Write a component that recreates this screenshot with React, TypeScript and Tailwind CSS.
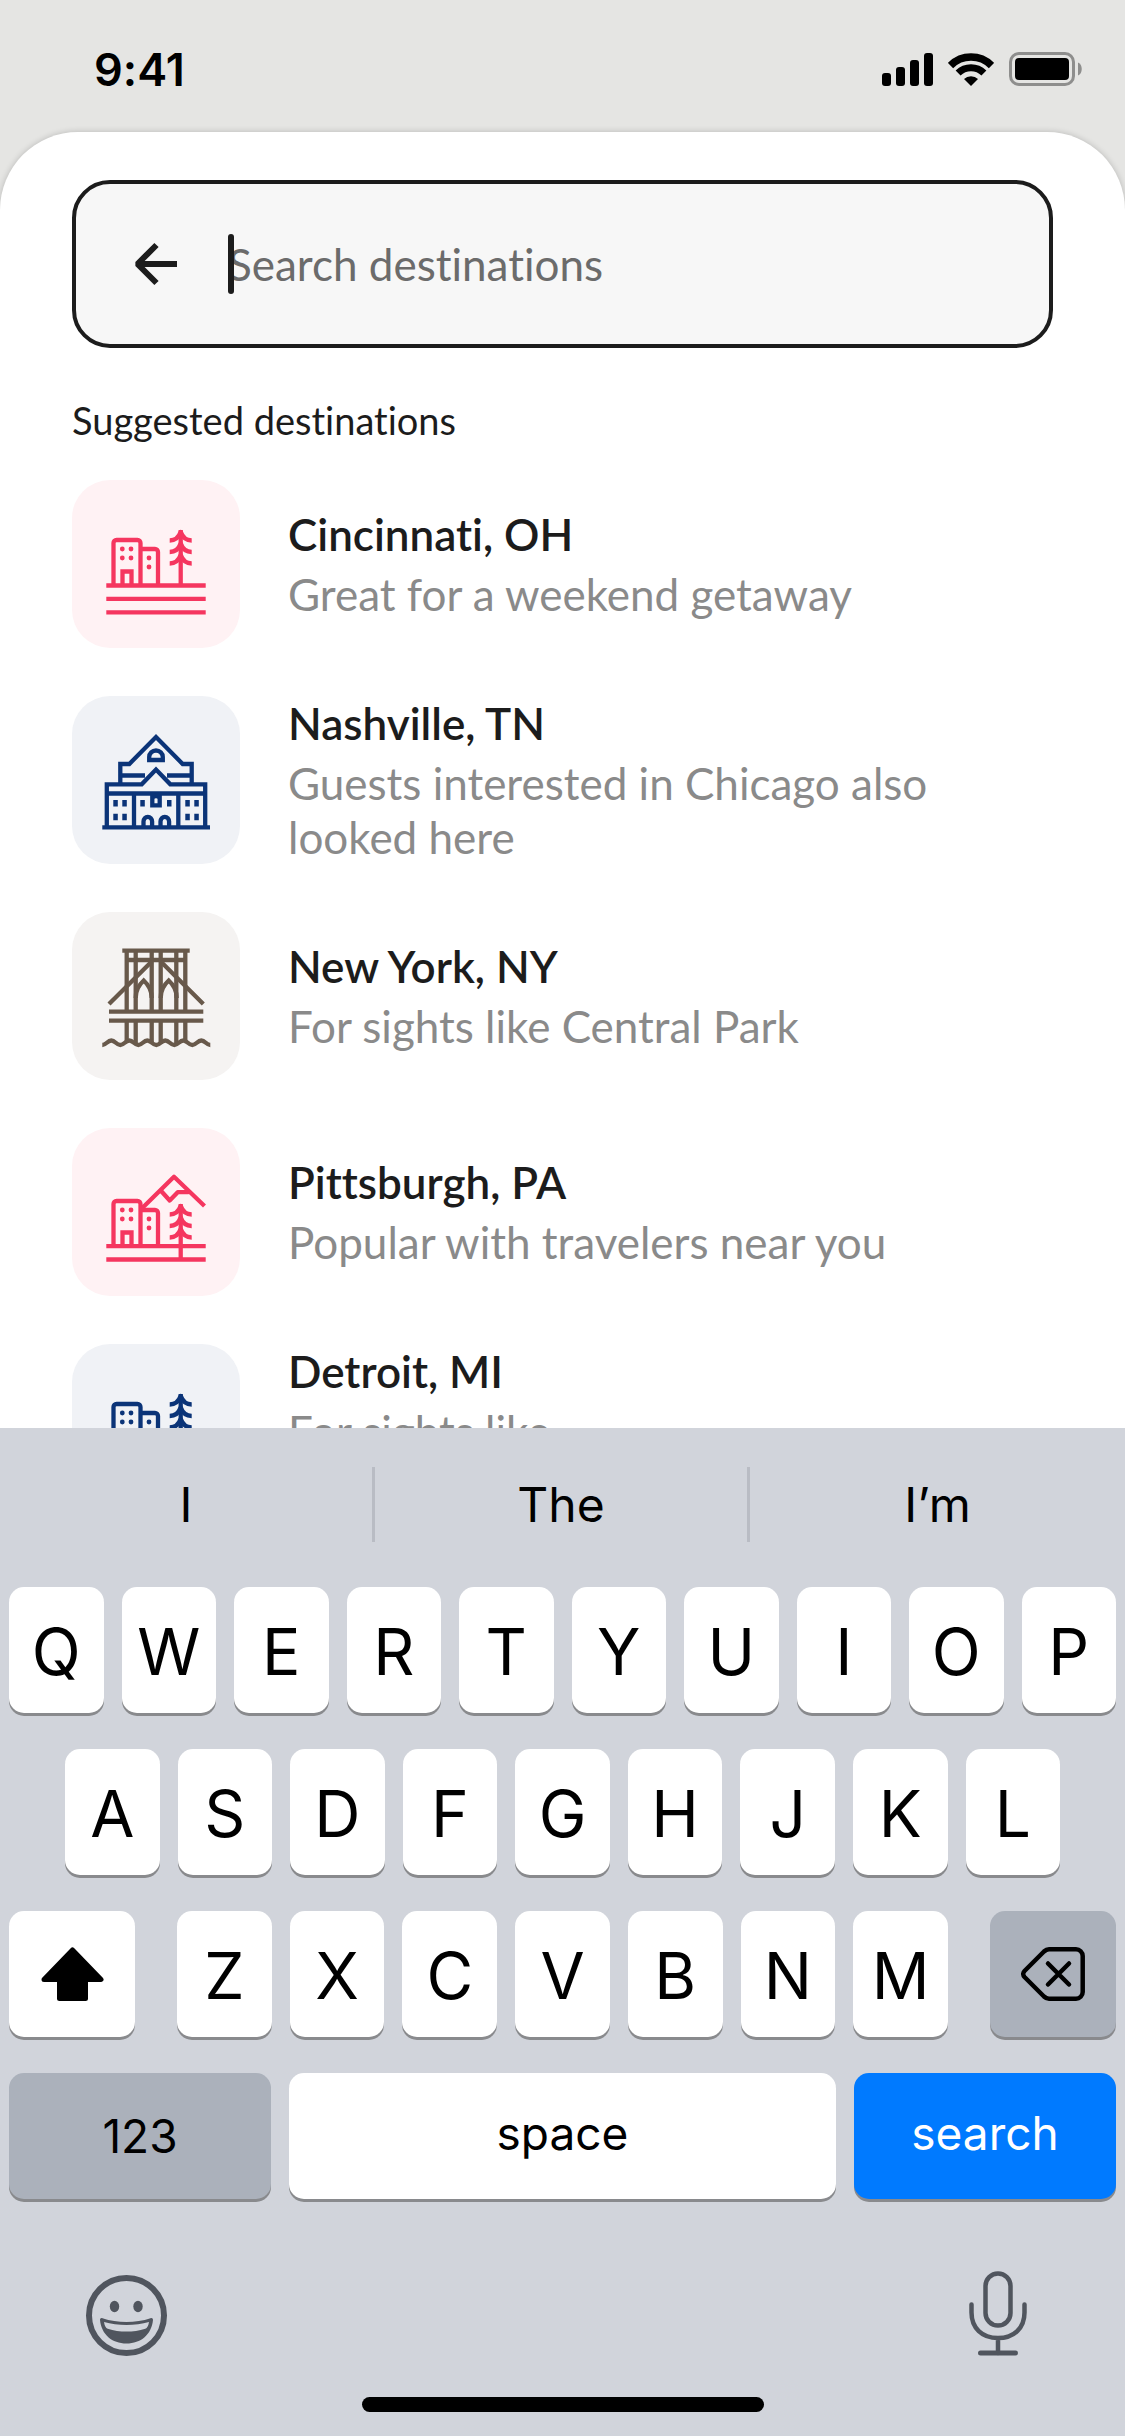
import { useState } from 'react';

type Destination = {
  id: string;
  title: string;
  description: string;
  tileClass: string;
  icon: React.ReactNode;
  alignTop?: boolean;
};

const Buildings: React.FC<{ top: number }> = ({ top }) => (
  <g transform={`translate(0 ${top})`}>
    <path d="M41.5 46V4a3 3 0 0 1 3-3h21a3 3 0 0 1 3 3v42M68.5 10H83a3 3 0 0 1 3 3v33M50.5 46V32.500h9V46" />
    <g fill="currentColor" stroke="none">
      <circle cx="50.300" cy="10" r="2.400" />
      <circle cx="59" cy="10" r="2.400" />
      <circle cx="50.300" cy="19" r="2.400" />
      <circle cx="59" cy="19" r="2.400" />
      <circle cx="77" cy="19" r="2.400" />
      <circle cx="77" cy="28" r="2.400" />
    </g>
  </g>
);

const Tree: React.FC<{ top: number; height: number }> = ({ top, height }) => (
  <g transform={`translate(0 ${top})`}>
    <path d={`M108.700 1V${height}`} />
    <path
      strokeWidth={4.5}
      strokeLinejoin="round"
      d="M97.700 11.500c5.500 0 9-3 11-8.500 2 5.500 5.500 8.500 11 8.500M97.700 23c5.500 0 9-3 11-8.500 2 5.500 5.500 8.500 11 8.500M97.700 34.500c5.500 0 9-3 11-8.500 2 5.500 5.500 8.500 11 8.500"
    />
  </g>
);

const CityIcon = () => (
  <svg className="size-full" viewBox="0 0 168 168" fill="none" stroke="currentColor" strokeWidth={4.3}>
    <Buildings top={59} />
    <Tree top={49} height={56} />
    <path d="M34.300 105.500h99.400M34.300 118.800h99.400M34.300 132.300h99.400" />
  </svg>
);

const HallIcon = () => (
  <svg className="size-full" viewBox="0 0 168 168" fill="none" stroke="currentColor" strokeWidth={4.3}>
    <path d="M30.300 131.300H138" />
    <path d="M34.800 131V88.300h34.900L84 73.500l14.300 14.800h34.900V131M35 97.500h98M62 97v34M106.300 97v34" />
    <path d="M48.300 88V68h9L84 41l26.700 27h9v20M48.300 79.500H73M95 79.500h24.700" />
    <path d="M77.200 64V61a6.800 6.500 0 0 1 13.600 0v3z" />
    <path d="M80.300 99v10.300h7.400V99M80.300 103a3.700 3 0 0 1 7.400 0" />
    <path d="M71.500 131v-5.500a4.300 4.700 0 0 1 8.600 0v5.500M88.500 131v-5.500a4.300 4.700 0 0 1 8.600 0v5.500" />
    <g fill="currentColor" stroke="none">
      <path d="M41.300 104h4.500v6.500h-4.500zM50.300 104h4.500v6.500h-4.500zM41.300 117.700h4.500v6.500h-4.500zM50.300 117.700h4.500v6.500h-4.500z" />
      <path d="M113.300 104h4.500v6.500h-4.500zM122.300 104h4.500v6.500h-4.500zM113.300 117.700h4.500v6.500h-4.500zM122.300 117.700h4.500v6.500h-4.500z" />
      <path d="M68.300 104h4.500v6.500h-4.500zM95 104h4.500v6.500H95z" />
    </g>
  </svg>
);

const BridgeIcon = () => (
  <svg className="size-full" viewBox="0 0 168 168" fill="none" stroke="currentColor" strokeWidth={4.3}>
    <path d="M50.300 38.700h67.400M54.700 48h58.600M37 99.700h94.300M37 108.700h94.300" />
    <path d="M54.700 39v60M63.700 39v60M79.700 39v60M88.700 39v60M104.300 39v60M113.300 39v60" />
    <path d="M54.700 109v21M63.700 109v23M79.700 109v21M88.700 109v21M104.300 109v23M113.300 109v21" />
    <path d="M37 92l42.700-42.500M131.300 92L88.700 49.500" />
    <path d="M63.700 86c0-7 3-13 8-17.500 5 4.500 8 10.500 8 17.500M88.700 86c0-7 3-13 8-17.500 5 4.500 8 10.500 8 17.500" />
    <path d="M30.300 133c4 0 5-4.500 9-4.500s5 4.500 9 4.500 5-4.500 9-4.500 5 4.500 9 4.500 5-4.500 9-4.500 5 4.500 9 4.500 5-4.500 9-4.500 5 4.500 9 4.500 5-4.500 9-4.500 5 4.500 9 4.500 5-4.500 9-4.500 5 4.500 9 4.500" />
  </svg>
);

const MountainIcon = () => (
  <svg className="size-full" viewBox="0 0 168 168" fill="none" stroke="currentColor" strokeWidth={4.3}>
    <Buildings top={72} />
    <Tree top={75} height={57} />
    <path strokeLinejoin="round" d="M70.300 80L102 48.700 132.500 78M88.700 62.500l9 10 8-8.300h11" />
    <path d="M34.300 118.200h99.400M34.300 131.500h99.400" />
  </svg>
);

const destinations: Destination[] = [
  {
    id: 'cincinnati',
    title: 'Cincinnati, OH',
    description: 'Great for a weekend getaway',
    tileClass: 'bg-[#fff2f4] text-[#f5365f]',
    icon: <CityIcon />,
  },
  {
    id: 'nashville',
    title: 'Nashville, TN',
    description: 'Guests interested in Chicago also looked here',
    tileClass: 'bg-[#f0f2f6] text-[#0b3478]',
    icon: <HallIcon />,
  },
  {
    id: 'new-york',
    title: 'New York, NY',
    description: 'For sights like Central Park',
    tileClass: 'bg-[#f5f3f2] text-[#68594b]',
    icon: <BridgeIcon />,
  },
  {
    id: 'pittsburgh',
    title: 'Pittsburgh, PA',
    description: 'Popular with travelers near you',
    tileClass: 'bg-[#fff2f4] text-[#f5365f]',
    icon: <MountainIcon />,
  },
  {
    id: 'detroit',
    title: 'Detroit, MI',
    description: 'For sights like',
    tileClass: 'bg-[#f0f2f6] text-[#0b3478]',
    icon: <CityIcon />,
    alignTop: true,
  },
];

const suggestions = ['I', 'The', 'I’m'];

const StatusBar = () => (
  <header className="flex h-[132px] shrink-0 items-center justify-between pt-1.5 pr-[43px] pl-[94px] text-black">
    <span className="font-['Inter'] text-[45px] leading-none font-semibold">9:41</span>
    <div className="flex items-center gap-[15px]">
      <svg className="h-[33px] w-[51px]" viewBox="0 0 51 33" fill="currentColor">
        <rect x="0" y="20" width="9" height="13" rx="3" />
        <rect x="14" y="14" width="9" height="19" rx="3" />
        <rect x="28" y="7" width="9" height="26" rx="3" />
        <rect x="42" y="0" width="9" height="33" rx="3" />
      </svg>
      <svg className="h-[33px] w-[46px]" viewBox="0 0 46 33" fill="none" stroke="currentColor">
        <path strokeWidth="7.500" d="M2.500 12.500a29 29 0 0 1 41 0" />
        <path strokeWidth="7" d="M10.100 20.100a18.300 18.300 0 0 1 25.800 0" />
        <path fill="currentColor" stroke="none" d="M23 33l-7-7a10 10 0 0 1 14 0z" />
      </svg>
      <svg className="h-[34px] w-[73px]" viewBox="0 0 73 34">
        <rect x="1.500" y="1.500" width="63" height="31" rx="8.500" fill="none" stroke="#8e8e8d" strokeWidth="3" />
        <rect x="6" y="6" width="54" height="22" rx="4" fill="currentColor" />
        <path d="M69 10.500c5 1.500 5 11.500 0 13z" fill="#8e8e8d" />
      </svg>
    </div>
  </header>
);

const keyBase = 'flex h-[126px] items-center justify-center rounded-[15px] shadow-[0_3px_0_#898a8d]';

const LetterKeys: React.FC<{ letters: string; onPress: (letter: string) => void }> = ({ letters, onPress }) => (
  <>
    {letters.split('').map((letter) => (
      <button
        key={letter}
        type="button"
        onClick={() => onPress(letter)}
        className={`${keyBase} min-w-0 flex-1 bg-white pt-1 text-[64px] leading-none`}
      >
        {letter}
      </button>
    ))}
  </>
);

const Keyboard: React.FC<{ onType: (text: string) => void; onDelete: () => void }> = ({ onType, onDelete }) => (
  <section className="shrink-0 bg-[#d1d4db] pt-[39px] pb-6 font-['Inter'] text-black">
    {/* Predictive bar */}
    <div className="grid h-[75px] grid-cols-3 divide-x-3 divide-[#b9bcc4]">
      {suggestions.map((word) => (
        <button key={word} type="button" onClick={() => onType(word)} className="text-[48px] leading-none">
          {word}
        </button>
      ))}
    </div>

    {/* Keys */}
    <div className="mt-[45px] flex flex-col gap-9 px-[9px]">
      <div className="flex gap-[18px]">
        <LetterKeys letters="QWERTYUIOP" onPress={onType} />
      </div>
      <div className="flex gap-[18px] px-14">
        <LetterKeys letters="ASDFGHJKL" onPress={onType} />
      </div>
      <div className="flex gap-[42px]">
        <button type="button" aria-label="Shift" className={`${keyBase} w-[126px] bg-white`}>
          <svg className="h-[54px] w-[63px]" viewBox="0 0 63 54" fill="currentColor" stroke="currentColor" strokeWidth="5" strokeLinejoin="round">
            <path d="M31.500 3L60 32.500H44.500v19h-26v-19H3z" />
          </svg>
        </button>
        <div className="flex flex-1 gap-[18px]">
          <LetterKeys letters="ZXCVBNM" onPress={onType} />
        </div>
        <button type="button" aria-label="Delete" onClick={onDelete} className={`${keyBase} w-[126px] bg-[#abb1bb]`}>
          <svg className="h-[54px] w-[64px]" viewBox="0 0 64 54" fill="none" stroke="currentColor" strokeWidth="4.500" strokeLinecap="round" strokeLinejoin="round">
            <path d="M28 2.300h27a6.700 6.700 0 0 1 6.700 6.700v36a6.700 6.700 0 0 1-6.700 6.700H28c-2 0-3.500-.8-5-2.200L3.500 30c-1.700-1.800-1.700-4.200 0-6L23 4.500c1.500-1.400 3-2.200 5-2.200z" />
            <path d="M27 16.500l21 21M48 16.500l-21 21" />
          </svg>
        </button>
      </div>
      <div className="flex gap-[18px] text-[46px] leading-none">
        <button type="button" className={`${keyBase} w-[262px] bg-[#abb1bb]`}>123</button>
        <button type="button" onClick={() => onType(' ')} className={`${keyBase} flex-1 bg-white pb-1.5`}>space</button>
        <button type="submit" className={`${keyBase} w-[262px] bg-[#007aff] pb-1.5 text-white`}>search</button>
      </div>
    </div>

    <div className="mt-[72px] flex items-end justify-between pr-[98px] pl-[86px] text-[#50555e]">
      <button type="button" aria-label="Emoji">
        <svg className="size-[81px]" viewBox="0 0 81 81" fill="none" stroke="currentColor" strokeWidth="6">
          <circle cx="40.500" cy="40.500" r="37.500" />
          <g fill="currentColor" stroke="none">
            <ellipse cx="28.500" cy="31.500" rx="4.700" ry="5.700" />
            <ellipse cx="52" cy="31.500" rx="4.700" ry="5.700" />
            <path fillRule="evenodd" d="M14 45c0-1.500 1-2.300 2.500-1.800 15 5 33 5 48 0 1.500-.5 2.500.3 2.500 1.800-1.500 14.500-12 23.500-26.500 23.500S15.500 59.500 14 45zM18 47c.7 4 1.700 6 3.700 6.700 12 3.800 25.500 3.800 37.600 0 2-.7 3-2.700 3.700-6.700-14 4-31 4-45 0z" />
          </g>
        </svg>
      </button>
      <button type="button" aria-label="Dictation">
        <svg className="h-[85px] w-[58px]" viewBox="0 0 58 85" fill="none" stroke="currentColor" strokeWidth="4.500" strokeLinecap="round">
          <rect x="16.500" y="2.500" width="25" height="52" rx="12.500" />
          <path d="M2.500 33.500v8C2.500 57 13 67 29 67s26.500-10 26.500-25.500v-8M29 67v15" />
          <path strokeWidth="5" d="M11.500 82h35" />
        </svg>
      </button>
    </div>

    {/* Home indicator */}
    <div className="mx-auto mt-[41px] h-[15px] w-[402px] rounded-full bg-black"></div>
  </section>
);

const App: React.FC = () => {
  const [query, setQuery] = useState('');

  return (
    <div className="flex h-screen flex-col overflow-hidden bg-[#e5e5e3] font-['Lato',sans-serif] text-[#1c1c1c] [font-variant-ligatures:none]">
      <StatusBar />

      <main className="min-h-0 flex-1 overflow-hidden rounded-t-[78px] bg-white px-[72px] pt-12 shadow-[0_0_6px_rgba(0,0,0,0.2)]">
        {/* Search box */}
        <div className="flex h-[168px] items-center gap-12 rounded-[38px] border-4 border-[#1c1c1c] bg-[#f7f7f7] px-14">
          <button type="button" aria-label="Back">
            <svg className="size-12" viewBox="0 0 48 48" fill="none" stroke="currentColor" strokeWidth="6">
              <path strokeLinejoin="bevel" d="M45 24H6M24.500 5L5.500 24l19 19" />
            </svg>
          </button>
          <div className="relative flex flex-1 items-center">
            <input
              type="text"
              aria-label="Search destinations"
              placeholder="Search destinations"
              value={query}
              onChange={(e) => setQuery(e.target.value)}
              className="w-full bg-transparent text-[44px] leading-[60px] caret-transparent outline-none placeholder:text-[#6b6b6b]"
            />
            {query === '' && <span className="absolute left-0 h-[60px] w-[6px] rounded-full bg-[#1c1c1c]"></span>}
          </div>
        </div>

        <h2 className="mt-12 text-[38px] leading-[48px]">Suggested destinations</h2>

        <ul className="mt-9 flex flex-col gap-12">
          {destinations.map((destination) => (
            <li key={destination.id}>
              <a
                href={`#${destination.id}`}
                className={`flex gap-12 ${destination.alignTop ? 'items-start' : 'items-center'}`}
              >
                <div className={`size-[168px] shrink-0 rounded-[38px] ${destination.tileClass}`}>{destination.icon}</div>
                <div className="flex flex-col gap-[6px] text-[44px] leading-[54px]">
                  <h3 className="font-semibold">{destination.title}</h3>
                  <p className="text-[#8a8a8a]">{destination.description}</p>
                </div>
              </a>
            </li>
          ))}
        </ul>
      </main>

      <Keyboard onType={(text) => setQuery(query + text)} onDelete={() => setQuery(query.slice(0, -1))} />
    </div>
  );
};

export default App;
